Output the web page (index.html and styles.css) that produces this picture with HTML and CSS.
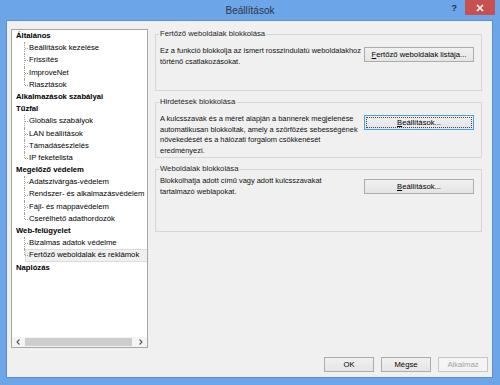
FILE: index.html
```html
<!DOCTYPE html>
<html lang="hu">
<head>
<meta charset="utf-8">
<title>Beállítások</title>
<link rel="stylesheet" href="styles.css">
</head>
<body>
<div class="window">
  <div class="titlebar">
    <div></div>
    <div class="title">Beállítások</div>
    <div class="controls">
      <span class="help">?</span>
      <span class="close"><svg width="8" height="8" viewBox="0 0 8 8"><path d="M1 1L7 7M7 1L1 7" stroke="#fff" stroke-width="1.6"/></svg></span>
    </div>
  </div>
  <div class="client">
    <div class="main">
      <div class="tree">
        <div class="list">
          <div class="cat">Általános</div>
          <div class="leaf"><span>Beállítások kezelése</span></div>
          <div class="leaf"><span>Frissítés</span></div>
          <div class="leaf"><span>ImproveNet</span></div>
          <div class="leaf last"><span>Riasztások</span></div>
          <div class="cat">Alkalmazások szabályai</div>
          <div class="cat">Tűzfal</div>
          <div class="leaf"><span>Globális szabályok</span></div>
          <div class="leaf"><span>LAN beállítások</span></div>
          <div class="leaf"><span>Támadásészlelés</span></div>
          <div class="leaf last"><span>IP feketelista</span></div>
          <div class="cat">Megelőző védelem</div>
          <div class="leaf"><span>Adatszivárgás-védelem</span></div>
          <div class="leaf"><span>Rendszer- és alkalmazásvédelem</span></div>
          <div class="leaf"><span>Fájl- és mappavédelem</span></div>
          <div class="leaf last"><span>Cserélhető adathordozók</span></div>
          <div class="cat">Web-felügyelet</div>
          <div class="leaf"><span>Bizalmas adatok védelme</span></div>
          <div class="leaf last selected"><span>Fertőző weboldalak és reklámok</span></div>
          <div class="cat">Naplózás</div>
        </div>
        <div class="hscroll">
          <div class="arrow"><svg width="4" height="6" viewBox="0 0 4 6"><path d="M3.5 0.5L1 3L3.5 5.5" fill="none" stroke="#555" stroke-width="1.1"/></svg></div>
          <div class="track"><div class="thumb"></div></div>
          <div class="arrow"><svg width="4" height="6" viewBox="0 0 4 6"><path d="M0.5 0.5L3 3L0.5 5.5" fill="none" stroke="#555" stroke-width="1.1"/></svg></div>
        </div>
      </div>
      <div class="groups">
        <fieldset class="group g1">
          <legend>Fertőző weboldalak blokkolása</legend>
          <div class="row">
            <p class="desc">Ez a funkció blokkolja az ismert rosszindulatú weboldalakhoz<br>történő csatlakozásokat.</p>
            <button class="btn wide"><u>F</u>ertőző weboldalak listája...</button>
          </div>
        </fieldset>
        <fieldset class="group g2">
          <legend>Hirdetések blokkolása</legend>
          <div class="row">
            <p class="desc">A kulcsszavak és a méret alapján a bannerek megjelenése<br>automatikusan blokkoltak, amely a szörfözés sebességének<br>növekedését és a hálózati forgalom csökkenését<br>eredményezi.</p>
            <button class="btn wide focused"><u>B</u>eállítások...</button>
          </div>
        </fieldset>
        <fieldset class="group g3">
          <legend>Weboldalak blokkolása</legend>
          <div class="row shifted">
            <p class="desc">Blokkolhatja adott című vagy adott kulcsszavakat<br>tartalmazó weblapokat.</p>
            <button class="btn wide"><u>B</u>eállítások...</button>
          </div>
        </fieldset>
      </div>
    </div>
    <div class="footer">
      <button class="btn small">OK</button>
      <button class="btn small">Mégse</button>
      <button class="btn small" disabled>Alkalmaz</button>
    </div>
  </div>
</div>
</body>
</html>
```

FILE: styles.css
```css
* { box-sizing: border-box; }

html, body {
  margin: 0;
  padding: 0;
}

body {
  width: 500px;
  height: 385px;
  overflow: hidden;
  background: #6ca6e8;
  font-family: "Liberation Sans", Arial, sans-serif;
  font-size: 7.7px;
  color: #000;
}

.window {
  height: 385px;
  display: flex;
  flex-direction: column;
  background: #6ca6e8;
}

.titlebar {
  height: 20px;
  flex: none;
  display: grid;
  grid-template-columns: 1fr auto 1fr;
  align-items: center;
}

.title {
  font-size: 10px;
  color: #2c3440;
  padding-top: 1px;
}

.controls {
  display: flex;
  justify-content: flex-end;
  align-items: flex-start;
  height: 20px;
}

.help {
  font-size: 9px;
  font-weight: bold;
  color: #26323f;
  margin-top: 3px;
  margin-right: 8px;
}

.close {
  width: 30px;
  height: 15px;
  margin-right: 5px;
  background: #c75050;
  display: flex;
  align-items: center;
  justify-content: center;
}

.client {
  flex: 1;
  margin: 0 7px 7px 6px;
  border: 1px solid #5a90d2;
  background: #f0f0f0;
  display: flex;
  flex-direction: column;
  padding: 7px 4px 5px 4px;
  min-height: 0;
}

.main {
  flex: 1;
  display: flex;
  gap: 7px;
  min-height: 0;
  min-width: 0;
}

/* tree */
.tree {
  width: 137px;
  flex: none;
  margin-top: 1px;
  border: 1px solid #a6a6a6;
  background: #fff;
  display: flex;
  flex-direction: column;
  overflow: hidden;
}

.list {
  flex: 1;
  padding-left: 4px;
  overflow: hidden;
  white-space: nowrap;
}

.cat,
.leaf {
  height: 12.2px;
  line-height: 12.2px;
}

.cat {
  font-weight: bold;
}

.leaf {
  position: relative;
  padding-left: 9px;
}

.leaf span {
  display: inline-block;
  height: 12.2px;
  padding: 0 4px;
}

.leaf::before {
  content: "";
  position: absolute;
  left: 8px;
  top: 0;
  bottom: 0;
  border-left: 1px dotted #a0a0a0;
}

.leaf.last::before {
  bottom: 50%;
}

.leaf::after {
  content: "";
  position: absolute;
  left: 9px;
  top: 50%;
  width: 3px;
  border-top: 1px dotted #a0a0a0;
}

.leaf.selected span {
  background: #f0f0f0;
  box-shadow: inset 0 0 0 1px #dcdcdc;
  padding-right: 20px;
}

.hscroll {
  height: 10px;
  flex: none;
  display: grid;
  grid-template-columns: 12px 1fr 12px;
  background: #f4f4f4;
}

.arrow {
  display: flex;
  align-items: center;
  justify-content: center;
}

.track {
  display: flex;
  align-items: center;
}

.thumb {
  flex: 1;
  height: 8px;
  margin: 0 3px 0 1px;
  background: #cdcdcd;
}

/* group boxes */
.groups {
  flex: 1;
  min-width: 0;
  margin-right: 6px;
  padding-top: 1px;
  display: flex;
  flex-direction: column;
  gap: 6px;
}

.group {
  margin: 0;
  min-width: 0;
  border: 1px solid #d7d7d7;
  padding: 6px 7px 0 4px;
}

.g1 { height: 62px; }
.g2 { height: 61px; }
.g3 { height: 68px; }

.group legend {
  padding: 0 1px;
  margin-left: -1px;
  line-height: 10px;
  color: #1e1e1e;
}

.row {
  display: flex;
  align-items: flex-start;
  gap: 2px;
  min-width: 0;
}

.desc {
  flex: 1;
  min-width: 0;
  margin: 1px 0 0 0;
  font-size: 7.45px;
  line-height: 10.7px;
  color: #111;
  white-space: nowrap;
}

.row .btn {
  margin-top: 2px;
}

.row.shifted .desc {
  margin-top: -4px;
}

.row.shifted .btn {
  margin-top: -1px;
}

/* buttons */
.btn {
  font-family: inherit;
  font-size: 7.7px;
  color: #000;
  height: 15px;
  padding: 0;
  border: 1px solid #acacac;
  background: linear-gradient(#f0f0f0, #e5e5e5);
  flex: none;
  line-height: 12px;
}

.btn.wide {
  width: 110px;
}

.btn.small {
  width: 50px;
}

.btn.focused {
  border-color: #4aa0ec;
  outline: 1px dotted #444;
  outline-offset: -3px;
}

.btn:disabled {
  color: #a3a3a3;
  border-color: #c6c6c6;
  background: #f4f4f4;
}

.footer {
  flex: none;
  height: 15px;
  margin-top: 9px;
  display: flex;
  justify-content: flex-end;
  gap: 7px;
}
```
